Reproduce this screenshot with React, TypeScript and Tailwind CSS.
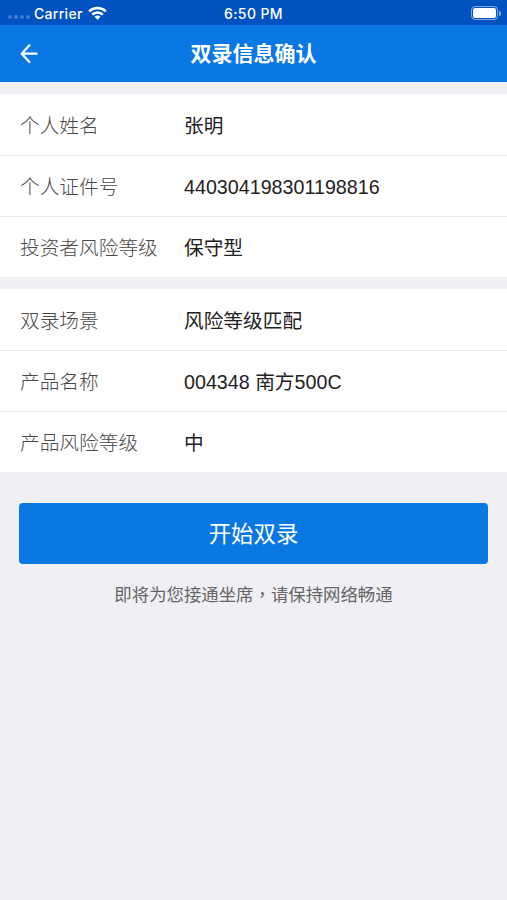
interface InfoItem {
  label: string;
  value: string;
}

const personItems: InfoItem[] = [
  { label: "个人姓名", value: "张明" },
  { label: "个人证件号", value: "440304198301198816" },
  { label: "投资者风险等级", value: "保守型" },
];

const productItems: InfoItem[] = [
  { label: "双录场景", value: "风险等级匹配" },
  { label: "产品名称", value: "004348 南方500C" },
  { label: "产品风险等级", value: "中" },
];

const StatusBar = () => (
  <div className="grid h-[25px] grid-cols-3 items-center bg-[#0052c1] pt-px font-['Inter',sans-serif] text-[14px] font-medium text-white">
    <div className="flex items-center pl-2">
      <div className="mt-2 flex gap-[2px]">
        {[0, 1, 2, 3].map(dot => (
          <span key={dot} className="size-[4px] rounded-full bg-white/25" />
        ))}
      </div>
      <span className="ml-1 tracking-[0.3px]">Carrier</span>
      <svg className="ml-[5px] h-[14px] w-[19px]" viewBox="0 0 19 14" fill="none" stroke="currentColor" strokeWidth="2.5">
        <path d="M1.2 5.3a11.8 11.8 0 0 1 16.6 0" />
        <path d="M4.2 8.6a7.6 7.6 0 0 1 10.6 0" />
        <path d="M9.5 13.7 6.5 10.7a4.2 4.2 0 0 1 6 0Z" fill="currentColor" stroke="none" />
      </svg>
    </div>
    <div className="text-center tracking-[0.4px]">6:50 PM</div>
    <div className="flex items-center justify-end pr-1.5">
      <div className="h-[14px] w-[27px] rounded-[4px] border border-white/50 p-px">
        <div className="h-full rounded-[2px] bg-white" />
      </div>
      <div className="ml-px h-[5px] w-[2px] rounded-r-full bg-white/50" />
    </div>
  </div>
);

const InfoList = ({ items }: { items: InfoItem[] }) => (
  <div className="bg-white">
    {items.map(item => (
      <div key={item.label} className="flex h-[61px] items-center border-t border-[#e6e6e8] pt-[3px] pl-5 first:border-t-0 first:pt-[4px]">
        <div className="w-[164px] font-light text-[#484848]">{item.label}</div>
        <div className="text-[#222]">{item.value}</div>
      </div>
    ))}
  </div>
);

const App = () => {
  return (
    <div className="min-h-screen bg-[#efeff4] font-['Liberation_Sans','Noto_Sans_CJK_SC',sans-serif] text-[19.7px]">
      <StatusBar />
      <header className="grid h-[57px] grid-cols-3 items-center bg-[#0a78e3] text-white">
        <button className="pl-5">
          <svg className="h-[20px] w-[18px]" viewBox="0 0 18 20" fill="none" stroke="currentColor" strokeWidth="2.2" strokeLinecap="round" strokeLinejoin="round">
            <path d="M16.6 9.7H2M9.4 1.2 1.7 9.7l7.7 8.3" />
          </svg>
        </button>
        <h1 className="pt-px text-center text-[21px] font-bold whitespace-nowrap">双录信息确认</h1>
      </header>

      <main className="flex flex-col gap-3 pt-3">
        <InfoList items={personItems} />
        <InfoList items={productItems} />
        <div className="px-[19px] pt-[19px] text-center">
          <button className="h-[61px] w-full rounded-[4px] bg-[#0a78e3] pt-[3px] text-[22.4px] text-white">开始双录</button>
          <p className="mt-[18px] text-[17.4px] text-[#666]">
            即将为您接通坐席<span className="font-['Noto_Sans_CJK_TC',sans-serif] leading-none" lang="zh-TW">，</span>请保持网络畅通
          </p>
        </div>
      </main>
    </div>
  );
};

export default App;
